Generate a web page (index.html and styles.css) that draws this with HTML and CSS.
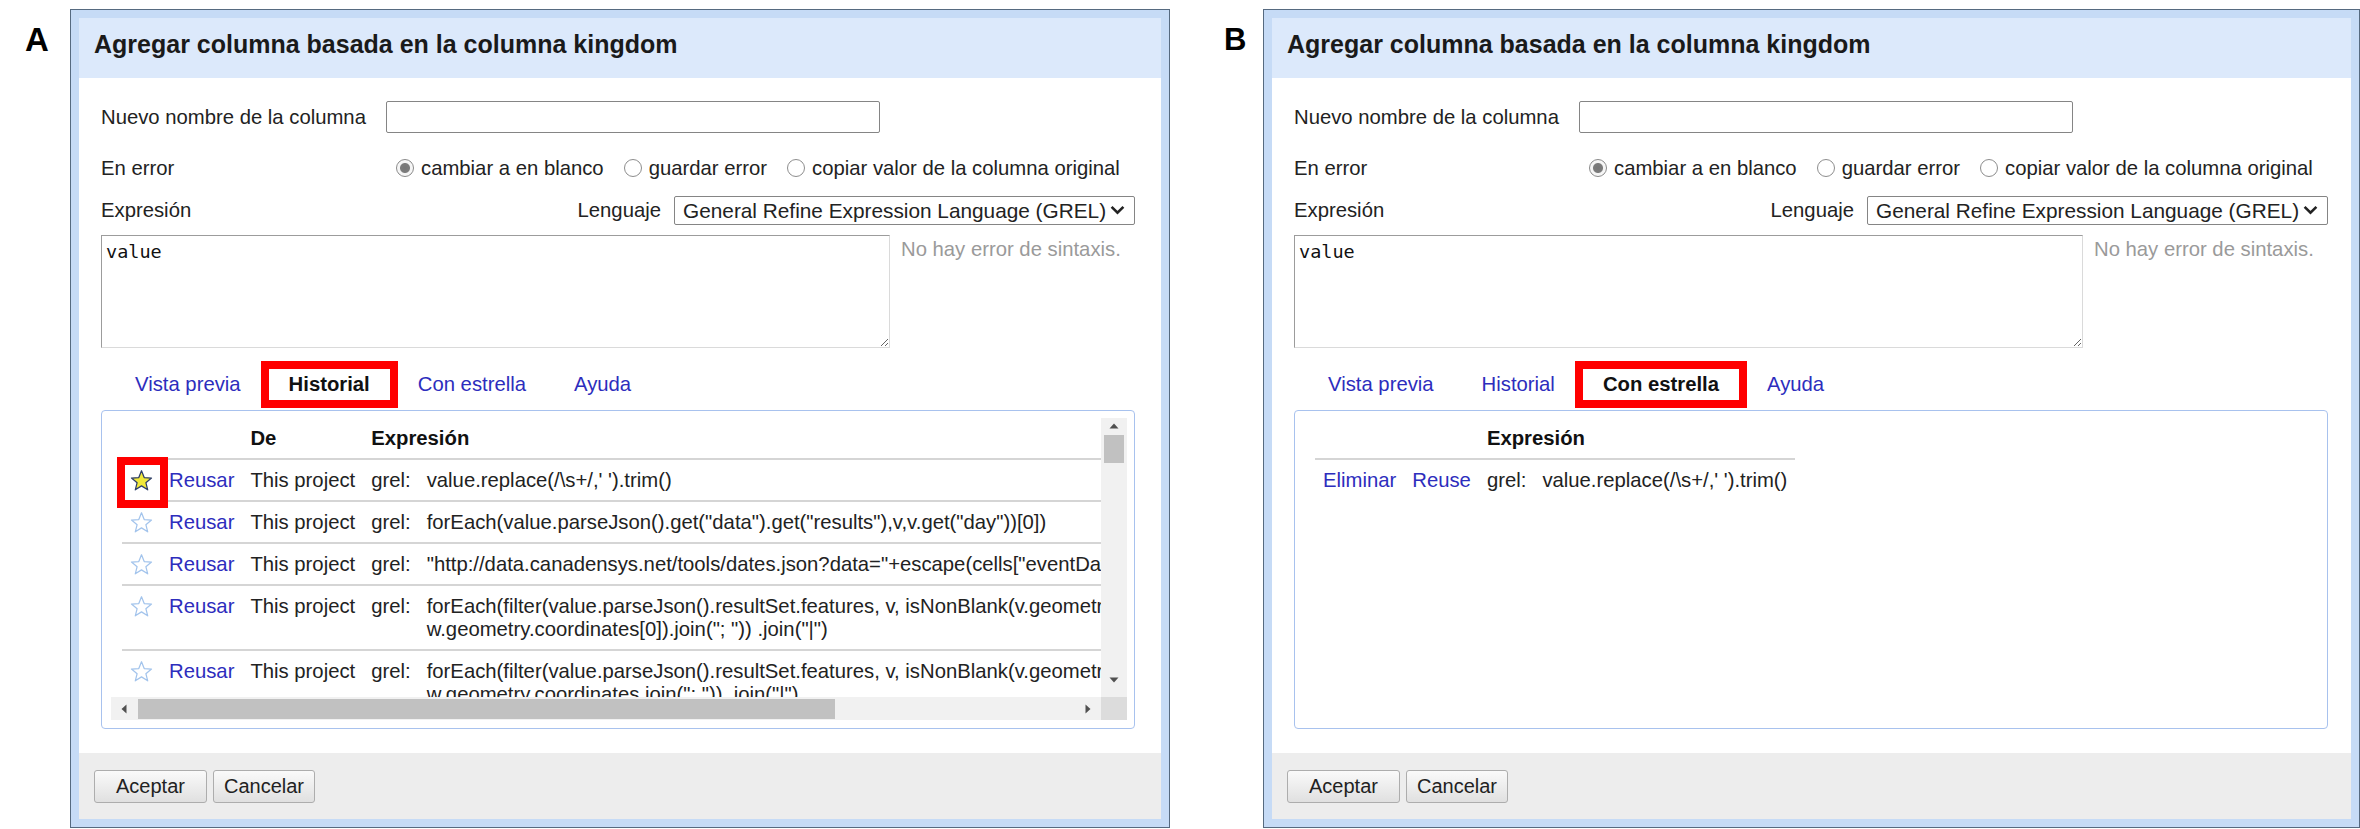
FILE: index.html
```html
<!DOCTYPE html>
<html lang="es">
<head>
<meta charset="utf-8">
<title>Agregar columna</title>
<link rel="stylesheet" href="styles.css">
</head>
<body>
<div class="page">

  <div class="figure fig-a">
    <div class="fig-label">A</div>
    <div class="dialog">
      <div class="dlg-header">Agregar columna basada en la columna kingdom</div>
      <div class="dlg-body">
        <div class="row">
          <div class="lbl">Nuevo nombre de la columna</div>
          <input class="text-input" type="text">
        </div>
        <div class="row row-error">
          <div class="lbl">En error</div>
          <div class="radios">
            <span class="radio checked"></span><span class="opt">cambiar a en blanco</span>
            <span class="radio"></span><span class="opt">guardar error</span>
            <span class="radio"></span><span class="opt">copiar valor de la columna original</span>
          </div>
        </div>
        <div class="row row-expr">
          <div class="lbl">Expresión</div>
          <div class="lang">
            <span>Lenguaje</span>
            <div class="select">
              <span>General Refine Expression Language (GREL)</span>
              <svg class="chev" viewBox="0 0 14 9"><path d="M1.5 1.5 L7 7 L12.5 1.5" fill="none" stroke="#222" stroke-width="2.4"/></svg>
            </div>
          </div>
        </div>
        <div class="editor">
          <textarea class="expr">value</textarea>
          <div class="status">No hay error de sintaxis.</div>
        </div>
        <ul class="tabs">
          <li class="tab">Vista previa</li>
          <li class="tab active marked">Historial</li>
          <li class="tab">Con estrella</li>
          <li class="tab">Ayuda</li>
        </ul>
        <div class="panel">
          <div class="scrollbox">
            <div class="viewport">
              <table class="hist">
                <thead>
                  <tr><th></th><th></th><th>De</th><th colspan="2">Expresión</th></tr>
                </thead>
                <tbody>
                  <tr>
                    <td class="star-cell"><span class="star-wrap marked-star"><svg class="star on" viewBox="0 0 24 24"><polygon points="12,1.8 14.82,8.92 22.46,9.4 16.57,14.28 18.47,21.7 12,17.6 5.53,21.7 7.43,14.28 1.54,9.4 9.18,8.92"/></svg></span></td>
                    <td class="link">Reusar</td><td>This project</td><td>grel:</td>
                    <td>value.replace(/\s+/,' ').trim()</td>
                  </tr>
                  <tr>
                    <td class="star-cell"><span class="star-wrap"><svg class="star" viewBox="0 0 24 24"><polygon points="12,1.8 14.82,8.92 22.46,9.4 16.57,14.28 18.47,21.7 12,17.6 5.53,21.7 7.43,14.28 1.54,9.4 9.18,8.92"/></svg></span></td>
                    <td class="link">Reusar</td><td>This project</td><td>grel:</td>
                    <td>forEach(value.parseJson().get("data").get("results"),v,v.get("day"))[0])</td>
                  </tr>
                  <tr>
                    <td class="star-cell"><span class="star-wrap"><svg class="star" viewBox="0 0 24 24"><polygon points="12,1.8 14.82,8.92 22.46,9.4 16.57,14.28 18.47,21.7 12,17.6 5.53,21.7 7.43,14.28 1.54,9.4 9.18,8.92"/></svg></span></td>
                    <td class="link">Reusar</td><td>This project</td><td>grel:</td>
                    <td>"http://data.canadensys.net/tools/dates.json?data="+escape(cells["eventDate"].value,"url")</td>
                  </tr>
                  <tr>
                    <td class="star-cell"><span class="star-wrap"><svg class="star" viewBox="0 0 24 24"><polygon points="12,1.8 14.82,8.92 22.46,9.4 16.57,14.28 18.47,21.7 12,17.6 5.53,21.7 7.43,14.28 1.54,9.4 9.18,8.92"/></svg></span></td>
                    <td class="link">Reusar</td><td>This project</td><td>grel:</td>
                    <td>forEach(filter(value.parseJson().resultSet.features, v, isNonBlank(v.geometry)), w,<br>w.geometry.coordinates[0]).join("; ")) .join("|")</td>
                  </tr>
                  <tr>
                    <td class="star-cell"><span class="star-wrap"><svg class="star" viewBox="0 0 24 24"><polygon points="12,1.8 14.82,8.92 22.46,9.4 16.57,14.28 18.47,21.7 12,17.6 5.53,21.7 7.43,14.28 1.54,9.4 9.18,8.92"/></svg></span></td>
                    <td class="link">Reusar</td><td>This project</td><td>grel:</td>
                    <td>forEach(filter(value.parseJson().resultSet.features, v, isNonBlank(v.geometry)), w,<br>w.geometry.coordinates.join("; ")) .join("|")</td>
                  </tr>
                </tbody>
              </table>
            </div>
            <div class="vbar">
              <div class="sb-btn sb-up"><svg viewBox="0 0 10 6" class="tri-v"><polygon points="5,0.5 9.5,5.5 0.5,5.5"/></svg></div>
              <div class="vthumb"></div>
              <div class="sb-fill"></div>
              <div class="sb-btn sb-down"><svg viewBox="0 0 10 6" class="tri-v"><polygon points="0.5,0.5 9.5,0.5 5,5.5"/></svg></div>
            </div>
            <div class="hbar">
              <div class="sb-btn sb-left"><svg viewBox="0 0 6 10" class="tri-h"><polygon points="5.5,0.5 5.5,9.5 0.5,5"/></svg></div>
              <div class="hthumb"></div>
              <div class="sb-fill"></div>
              <div class="sb-btn sb-right"><svg viewBox="0 0 6 10" class="tri-h"><polygon points="0.5,0.5 5.5,5 0.5,9.5"/></svg></div>
            </div>
            <div class="corner"></div>
          </div>
        </div>
      </div>
      <div class="dlg-footer">
        <button class="btn btn-ok" type="button">Aceptar</button>
        <button class="btn" type="button">Cancelar</button>
      </div>
    </div>
  </div>

  <div class="figure fig-b">
    <div class="fig-label">B</div>
    <div class="dialog">
      <div class="dlg-header">Agregar columna basada en la columna kingdom</div>
      <div class="dlg-body">
        <div class="row">
          <div class="lbl">Nuevo nombre de la columna</div>
          <input class="text-input" type="text">
        </div>
        <div class="row row-error">
          <div class="lbl">En error</div>
          <div class="radios">
            <span class="radio checked"></span><span class="opt">cambiar a en blanco</span>
            <span class="radio"></span><span class="opt">guardar error</span>
            <span class="radio"></span><span class="opt">copiar valor de la columna original</span>
          </div>
        </div>
        <div class="row row-expr">
          <div class="lbl">Expresión</div>
          <div class="lang">
            <span>Lenguaje</span>
            <div class="select">
              <span>General Refine Expression Language (GREL)</span>
              <svg class="chev" viewBox="0 0 14 9"><path d="M1.5 1.5 L7 7 L12.5 1.5" fill="none" stroke="#222" stroke-width="2.4"/></svg>
            </div>
          </div>
        </div>
        <div class="editor">
          <textarea class="expr">value</textarea>
          <div class="status">No hay error de sintaxis.</div>
        </div>
        <ul class="tabs">
          <li class="tab">Vista previa</li>
          <li class="tab">Historial</li>
          <li class="tab active marked">Con estrella</li>
          <li class="tab">Ayuda</li>
        </ul>
        <div class="panel">
          <div class="plain">
            <table class="hist">
              <thead>
                <tr><th></th><th></th><th colspan="2">Expresión</th></tr>
              </thead>
              <tbody>
                <tr>
                  <td class="link">Eliminar</td><td class="link">Reuse</td><td>grel:</td>
                  <td>value.replace(/\s+/,' ').trim()</td>
                </tr>
              </tbody>
            </table>
          </div>
        </div>
      </div>
      <div class="dlg-footer">
        <button class="btn btn-ok" type="button">Aceptar</button>
        <button class="btn" type="button">Cancelar</button>
      </div>
    </div>
  </div>

</div>
</body>
</html>
```

FILE: styles.css
```css
* { box-sizing: border-box; }

html, body {
  margin: 0;
  padding: 0;
  background: #fff;
  overflow: hidden;
}

body {
  font-family: "Liberation Sans", Arial, sans-serif;
  font-size: 20.3px;
  color: #222;
}

.page {
  display: flex;
  align-items: flex-start;
  width: 2360px;
  height: 829px;
  padding-left: 25px;
}

.figure {
  display: flex;
  align-items: flex-start;
  flex: none;
}

.fig-label {
  width: 45px;
  flex: none;
  margin-top: 20px;
  font-size: 33px;
  font-weight: bold;
  line-height: 40px;
  color: #000;
}

.fig-b { margin-left: 54px; }
.fig-b .fig-label { width: 39px; font-size: 31px; }

.dialog {
  width: 1100px;
  margin-top: 9px;
  border: 1px solid #566a80;
  background: #c6dbf6;
  padding: 8px;
}

.fig-b .dialog { width: 1097px; }

.dlg-header {
  height: 60px;
  background: #dce9fb;
  padding: 11px 0 0 15px;
  font-size: 25px;
  font-weight: bold;
  line-height: 30px;
  color: #1a1a1a;
  white-space: nowrap;
}

.dlg-body {
  background: #fff;
  padding: 22px 26px 24px 22px;
}

.fig-b .dlg-body { padding-right: 23px; }

.row {
  display: flex;
  align-items: center;
  height: 34px;
  line-height: 23px;
  white-space: nowrap;
}

.lbl {
  width: 285px;
  flex: none;
}

.row-error { margin-top: 17px; }

.row-expr {
  margin-top: 8px;
  justify-content: space-between;
}

.row-expr .lbl { width: auto; }

.text-input {
  width: 494px;
  height: 32px;
  border: 1px solid #858585;
  border-radius: 2px;
  padding: 0 4px;
  font: inherit;
  background: #fff;
}

.radios {
  display: flex;
  align-items: center;
  margin-left: 10px;
}

.radio {
  width: 18px;
  height: 18px;
  flex: none;
  border: 1px solid #8d8d8d;
  border-radius: 50%;
  background: #fff;
  margin-left: 20px;
  margin-right: 7px;
}

.radio:first-child { margin-left: 0; }

.radio.checked {
  border-color: #8a8a8a;
  background: radial-gradient(circle, #767676 0, #7c7c7c 4.5px, #f4f4f4 5.5px, #ffffff 100%);
}

.lang {
  display: flex;
  align-items: center;
  gap: 13px;
}

.select {
  width: 461px;
  height: 29px;
  border: 1px solid #858585;
  border-radius: 2px;
  display: flex;
  align-items: center;
  justify-content: space-between;
  padding: 0 9px 0 8px;
  color: #222;
  font-size: 20.8px;
}

.chev {
  width: 15px;
  height: 10px;
  display: block;
}

.editor {
  display: flex;
  align-items: flex-start;
  margin-top: 8px;
}

.expr {
  width: 789px;
  height: 113px;
  margin: 0;
  border: 1px solid;
  border-color: #9c9c9c #dadada #dadada #9c9c9c;
  padding: 4px;
  font-family: "DejaVu Sans Mono", "Liberation Mono", monospace;
  font-size: 18.5px;
  line-height: 23px;
  color: #111;
  background: #fff;
  resize: both;
  flex: none;
}

.status {
  margin-left: 11px;
  margin-top: 3px;
  line-height: 23px;
  color: #9a9a9a;
  white-space: nowrap;
}

.tabs {
  list-style: none;
  display: flex;
  margin: 21px 0 0;
  padding: 0 0 11px 14px;
}

.tab {
  position: relative;
  padding: 0 20px;
  margin-right: 8px;
  line-height: 30px;
  color: #2d2dbd;
  white-space: nowrap;
}

.tab.active {
  color: #111;
  font-weight: bold;
  background: #fff;
}

.tab.marked::after {
  content: "";
  position: absolute;
  top: -8px;
  bottom: -9px;
  left: -8px;
  right: -8px;
  border: 8px solid #ff0000;
}

.panel {
  height: 319px;
  border: 1px solid #a8c2ee;
  border-radius: 4px;
  padding: 7px 7px 8px 9px;
}

.scrollbox {
  display: grid;
  grid-template-columns: 1fr 26px;
  grid-template-rows: 279px 23px;
  height: 302px;
}

.viewport {
  overflow: hidden;
  min-width: 0;
}

.plain {
  height: 302px;
  overflow: hidden;
}

.hist {
  margin-left: 11px;
  border-collapse: separate;
  border-spacing: 0;
  white-space: nowrap;
}

.hist th,
.hist td {
  padding: 8.5px 8px;
  line-height: 23px;
  text-align: left;
  vertical-align: top;
}

.hist th {
  font-weight: bold;
  color: #111;
  border-bottom: 2px solid #d5d5d5;
}

.hist tbody tr + tr td {
  border-top: 2px solid #d5d5d5;
}

.hist td { color: #222; }
.hist td.link { color: #2d2dbd; }

.star-cell { width: 39px; }

.star-wrap {
  position: relative;
  display: block;
  width: 23px;
  height: 23px;
}

.star {
  display: block;
  width: 23px;
  height: 23px;
  fill: #ffffff;
  stroke: #a3c4ec;
  stroke-width: 1.3;
  stroke-linejoin: round;
}

.star.on {
  fill: #f1e83a;
  stroke: #2d3d6a;
}

.marked-star::after {
  content: "";
  position: absolute;
  top: -12px;
  bottom: -16px;
  left: -13px;
  right: -15px;
  border: 8px solid #ff0000;
}

.vbar {
  display: flex;
  flex-direction: column;
  align-items: center;
  background: #f1f1f1;
}

.hbar {
  display: flex;
  align-items: center;
  background: #f1f1f1;
}

.sb-fill { flex: 1; }

.sb-btn {
  display: flex;
  align-items: center;
  justify-content: center;
  flex: none;
}

.sb-up { height: 12px; width: 26px; padding-top: 3px; }
.sb-down { height: 34px; width: 26px; }
.sb-left { width: 26px; height: 23px; }
.sb-right { width: 26px; height: 23px; }

.tri-v { width: 10px; height: 6px; fill: #505050; display: block; }
.tri-h { width: 6px; height: 10px; fill: #505050; display: block; }

.vthumb {
  width: 20px;
  height: 28px;
  margin-top: 5px;
  background: #c1c1c1;
  flex: none;
}

.hthumb {
  width: 697px;
  height: 20px;
  margin-left: 1px;
  background: #c1c1c1;
  flex: none;
}

.corner { background: #dcdcdc; }

.dlg-footer {
  height: 66px;
  background: #ededed;
  padding: 17px 15px 16px;
  display: flex;
  gap: 6px;
}

.btn {
  height: 33px;
  font: inherit;
  font-size: 20px;
  line-height: 23px;
  color: #222;
  border: 1px solid #adadad;
  border-radius: 3px;
  background: linear-gradient(#fafafa, #e0e0e0);
  padding: 0 10px;
}

.btn-ok { padding: 0 21px; }
```
